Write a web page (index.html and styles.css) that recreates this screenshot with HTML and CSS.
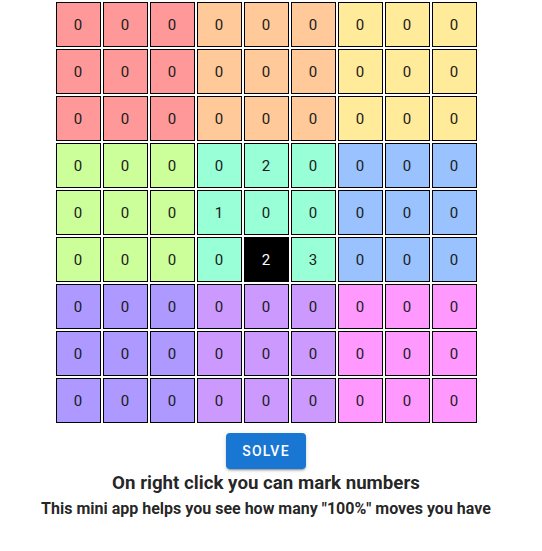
FILE: index.html
```html
<!DOCTYPE html>
<html>
<head>
<meta charset="utf-8">
<link rel="stylesheet" href="styles.css">
</head>
<body>
<div class="app">
  <div class="board">
    <div class="cell c1">0</div><div class="cell c1">0</div><div class="cell c1">0</div><div class="cell c2">0</div><div class="cell c2">0</div><div class="cell c2">0</div><div class="cell c3">0</div><div class="cell c3">0</div><div class="cell c3">0</div>
    <div class="cell c1">0</div><div class="cell c1">0</div><div class="cell c1">0</div><div class="cell c2">0</div><div class="cell c2">0</div><div class="cell c2">0</div><div class="cell c3">0</div><div class="cell c3">0</div><div class="cell c3">0</div>
    <div class="cell c1">0</div><div class="cell c1">0</div><div class="cell c1">0</div><div class="cell c2">0</div><div class="cell c2">0</div><div class="cell c2">0</div><div class="cell c3">0</div><div class="cell c3">0</div><div class="cell c3">0</div>
    <div class="cell c4">0</div><div class="cell c4">0</div><div class="cell c4">0</div><div class="cell c5">0</div><div class="cell c5">2</div><div class="cell c5">0</div><div class="cell c6">0</div><div class="cell c6">0</div><div class="cell c6">0</div>
    <div class="cell c4">0</div><div class="cell c4">0</div><div class="cell c4">0</div><div class="cell c5">1</div><div class="cell c5">0</div><div class="cell c5">0</div><div class="cell c6">0</div><div class="cell c6">0</div><div class="cell c6">0</div>
    <div class="cell c4">0</div><div class="cell c4">0</div><div class="cell c4">0</div><div class="cell c5">0</div><div class="cell marked">2</div><div class="cell c5">3</div><div class="cell c6">0</div><div class="cell c6">0</div><div class="cell c6">0</div>
    <div class="cell c7">0</div><div class="cell c7">0</div><div class="cell c7">0</div><div class="cell c8">0</div><div class="cell c8">0</div><div class="cell c8">0</div><div class="cell c9">0</div><div class="cell c9">0</div><div class="cell c9">0</div>
    <div class="cell c7">0</div><div class="cell c7">0</div><div class="cell c7">0</div><div class="cell c8">0</div><div class="cell c8">0</div><div class="cell c8">0</div><div class="cell c9">0</div><div class="cell c9">0</div><div class="cell c9">0</div>
    <div class="cell c7">0</div><div class="cell c7">0</div><div class="cell c7">0</div><div class="cell c8">0</div><div class="cell c8">0</div><div class="cell c8">0</div><div class="cell c9">0</div><div class="cell c9">0</div><div class="cell c9">0</div>
  </div>
  <button class="solve">Solve</button>
  <h3 class="title">On right click you can mark numbers</h3>
  <h4 class="subtitle">This mini app helps you see how many "100%" moves you have</h4>
</div>
</body>
</html>
```

FILE: styles.css
```css
html, body {
  margin: 0;
  padding: 0;
  background: #ffffff;
}
body {
  font-family: Roboto, "Liberation Sans", sans-serif;
  color: rgba(0, 0, 0, 0.87);
}
.app {
  width: 532px;
  display: flex;
  flex-direction: column;
  align-items: center;
  padding-top: 2px;
}
.board {
  display: grid;
  grid-template-columns: repeat(9, 45px);
  grid-auto-rows: 45px;
  gap: 2px;
}
.cell {
  box-sizing: border-box;
  border: 1px solid #000;
  display: flex;
  align-items: center;
  justify-content: center;
  font-size: 15px;
  color: #1a1a1a;
}
.c1 { background: #ff9999; }
.c2 { background: #ffc999; }
.c3 { background: #ffeb99; }
.c4 { background: #ccff99; }
.c5 { background: #99ffd6; }
.c6 { background: #99c2ff; }
.c7 { background: #ad99ff; }
.c8 { background: #cc99ff; }
.c9 { background: #ff99ff; }
.marked { background: #000; color: #fff; }
.solve {
  margin-top: 10px;
  width: 80px;
  height: 36px;
  border: none;
  border-radius: 4px;
  background: #1976d2;
  color: #fff;
  font-family: Roboto, "Liberation Sans", sans-serif;
  font-weight: 500;
  font-size: 14px;
  letter-spacing: 1.25px;
  text-transform: uppercase;
  box-shadow: 0 3px 1px -2px rgba(0,0,0,0.2), 0 2px 2px 0 rgba(0,0,0,0.14), 0 1px 5px 0 rgba(0,0,0,0.12);
}
.title {
  margin: 0;
  font-size: 18.72px;
  font-weight: 700;
  line-height: 28px;
}
.subtitle {
  margin: 0;
  font-size: 16px;
  font-weight: 700;
  line-height: 24px;
}
```
